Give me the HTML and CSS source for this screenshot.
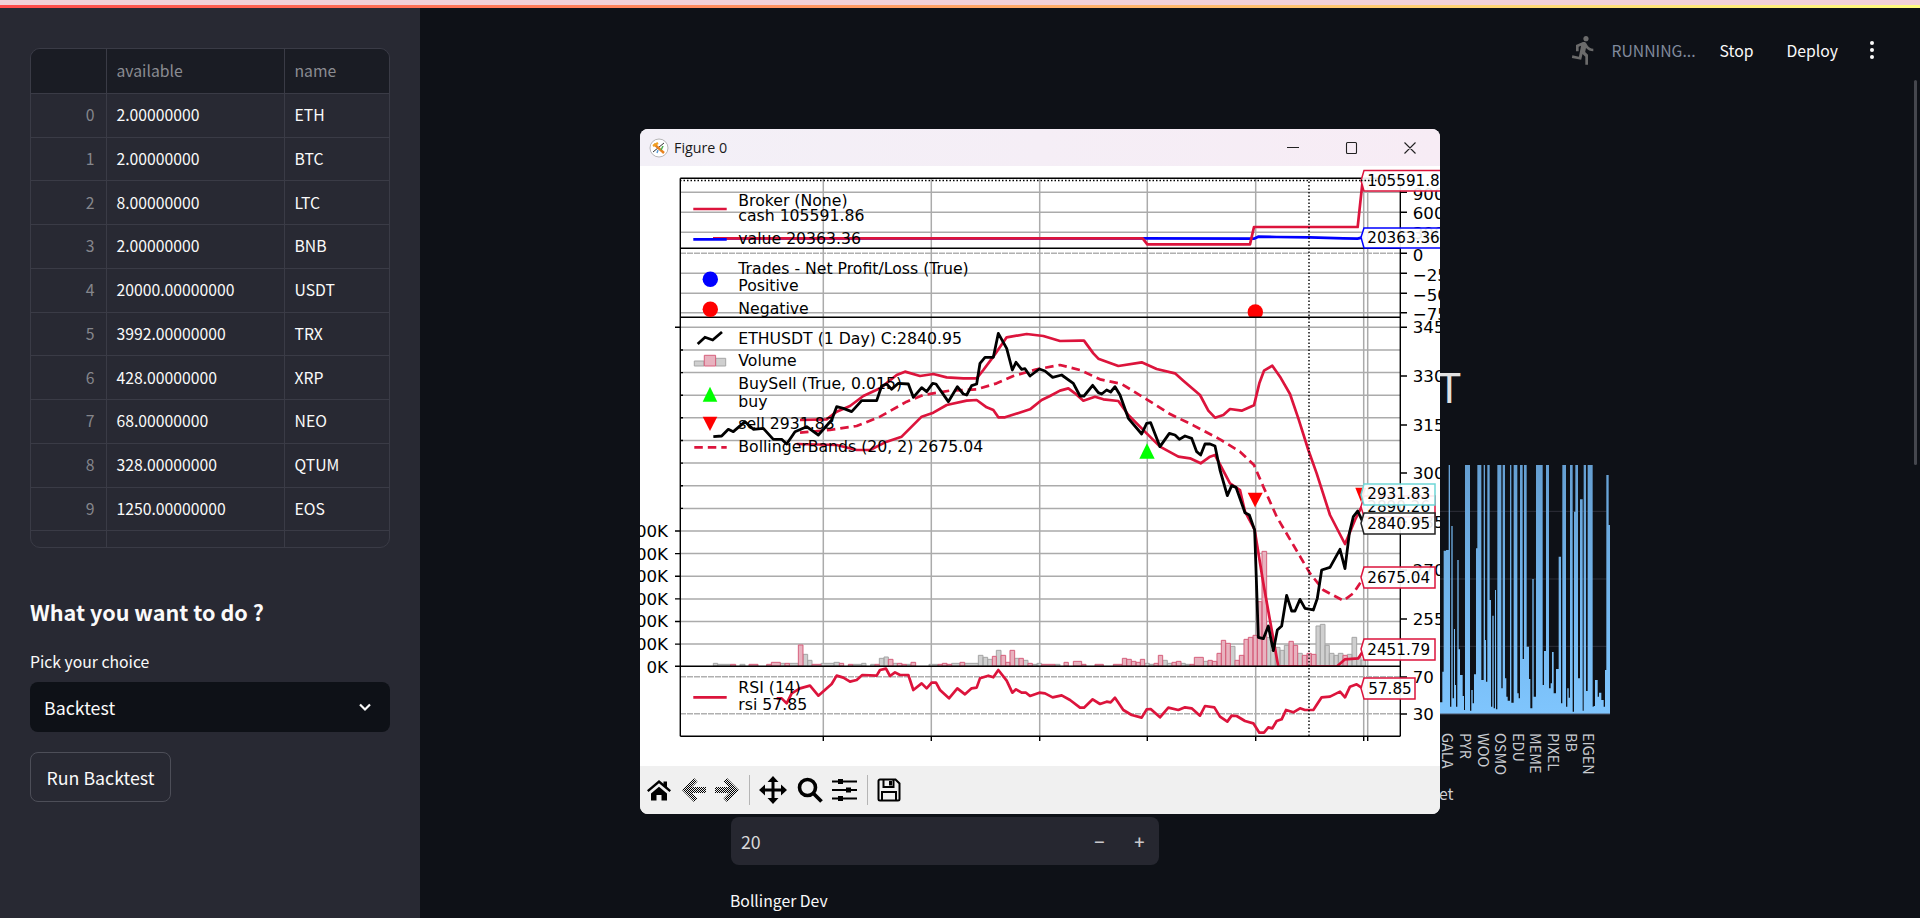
FILE: index.html
```html
<!DOCTYPE html>
<html lang="en">
<head>
<meta charset="utf-8">
<title>Backtest</title>
<link rel="stylesheet" href="styles.css">
</head>
<body>
<div class="loadbar"></div>
<div class="app">
  <aside class="sidebar">
    <div class="df">
      <div class="row head"><div class="c idx"></div><div class="c val">available</div><div class="c nm">name</div></div>
      <div class="row"><div class="c idx">0</div><div class="c val">2.00000000</div><div class="c nm">ETH</div></div>
      <div class="row"><div class="c idx">1</div><div class="c val">2.00000000</div><div class="c nm">BTC</div></div>
      <div class="row"><div class="c idx">2</div><div class="c val">8.00000000</div><div class="c nm">LTC</div></div>
      <div class="row"><div class="c idx">3</div><div class="c val">2.00000000</div><div class="c nm">BNB</div></div>
      <div class="row"><div class="c idx">4</div><div class="c val">20000.00000000</div><div class="c nm">USDT</div></div>
      <div class="row"><div class="c idx">5</div><div class="c val">3992.00000000</div><div class="c nm">TRX</div></div>
      <div class="row"><div class="c idx">6</div><div class="c val">428.00000000</div><div class="c nm">XRP</div></div>
      <div class="row"><div class="c idx">7</div><div class="c val">68.00000000</div><div class="c nm">NEO</div></div>
      <div class="row"><div class="c idx">8</div><div class="c val">328.00000000</div><div class="c nm">QTUM</div></div>
      <div class="row"><div class="c idx">9</div><div class="c val">1250.00000000</div><div class="c nm">EOS</div></div>
      <div class="row"><div class="c idx">10</div><div class="c val">11100.00000000</div><div class="c nm">ONT</div></div>
    </div>
    <h2 class="side-title">What you want to do ?</h2>
    <div class="field-label">Pick your choice</div>
    <div class="select">
      <span>Backtest</span>
      <svg class="chev" width="16" height="16" viewBox="0 0 16 16"><path d="M3 5.500l5 5 5-5" fill="none" stroke="#fafafa" stroke-width="2.200"/></svg>
    </div>
    <button class="btn">Run Backtest</button>
  </aside>

  <main class="main">
    <header class="top">
      <svg class="runner" width="28" height="32" viewBox="2 0 20 24"><path fill="#6b6b6b" d="M13.49 5.480c1.100 0 2-.9 2-2s-.9-2-2-2-2 .9-2 2 .9 2 2 2zm-3.600 13.900l1-4.400 2.100 2v6h2v-7.500l-2.100-2 .6-3c1.300 1.500 3.300 2.500 5.500 2.500v-2c-1.900 0-3.500-1-4.300-2.400l-1-1.600c-.4-.6-1-1-1.700-1-.3 0-.5.100-.8.100l-5.200 2.200v4.700h2v-3.400l1.800-.7-1.600 8.100-4.900-1-.4 2 7 1.400z"/></svg>
      <span class="running">RUNNING...</span>
      <span class="act stop">Stop</span>
      <span class="act deploy">Deploy</span>
      <svg class="dots" width="6" height="20" viewBox="0 0 6 20"><circle cx="3" cy="3" r="2"/><circle cx="3" cy="10" r="2"/><circle cx="3" cy="17" r="2"/></svg>
    </header>
    <div class="column">
      <h1 class="page-title">T</h1>
      <svg class="spectrum" width="190" height="320" viewBox="1420 460 190 320">
        <defs><linearGradient id="barfill" x1="0" y1="0" x2="0" y2="1"><stop offset="0" stop-color="#659fd2"/><stop offset=".6" stop-color="#74b8f0"/><stop offset="1" stop-color="#7fc5fd"/></linearGradient></defs>
        <g transform="translate(1420 340) scale(.33333)">
          <path class="sp-grid" d="M60 514H560M60 717H560M60 919H560"/>
          <path fill="url(#barfill)" d="M60 1122V1087H67V1122ZM67 1122V995H71V1122ZM71 1122V632H78V1122ZM78 1122V630H86V1122ZM86 1122V375H90V1122ZM90 1122V1100H94V1122ZM94 1122V558H98V1122ZM98 1122V1075H102V1122ZM102 1122V867H105V1122ZM105 1122V1035H108V1122ZM108 1122V1100H112V1122ZM112 1122V660H116V1122ZM116 1122V928H120V1122ZM120 1122V1005H128V1122ZM128 1122V1068H132V1122ZM132 1122V1110H135V1122ZM135 1122V375H150V1122ZM150 1122V1112H154V1122ZM154 1122V1050H158V1122ZM158 1122V1090H162V1122ZM162 1122V1003H168V1122ZM168 1122V625H172V1122ZM172 1122V375H184V1122ZM184 1122V1020H191V1122ZM191 1122V375H195V1122ZM195 1122V900H198V1122ZM198 1122V1025H202V1122ZM202 1122V375H209V1122ZM209 1122V780H213V1122ZM213 1122V1100H217V1122ZM217 1122V827H221V1122ZM221 1122V1105H225V1122ZM225 1122V750H228V1122ZM228 1122V1108H232V1122ZM232 1122V375H244V1122ZM244 1122V1045H248V1122ZM248 1122V375H255V1122ZM255 1122V1015H259V1122ZM259 1122V1070H263V1122ZM263 1122V1082H270V1122ZM270 1122V375H274V1122ZM274 1122V1088H281V1122ZM281 1122V375H292V1122ZM292 1122V1060H296V1122ZM296 1122V1075H300V1122ZM300 1122V375H308V1122ZM308 1122V957H312V1122ZM312 1122V375H320V1122ZM320 1122V920H327V1122ZM327 1122V1017H331V1122ZM331 1122V1105H337V1122ZM337 1122V717H341V1122ZM341 1122V1070H348V1122ZM348 1122V375H368V1122ZM368 1122V1035H372V1122ZM372 1122V933H378V1122ZM378 1122V375H387V1122ZM387 1122V1045H392V1122ZM392 1122V1030H396V1122ZM396 1122V936H401V1122ZM401 1122V1060H408V1122ZM408 1122V987H416V1122ZM416 1122V650H423V1122ZM423 1122V1090H427V1122ZM427 1122V375H438V1122ZM438 1122V1100H442V1122ZM442 1122V1045H446V1122ZM446 1122V1073H450V1122ZM450 1122V375H458V1122ZM458 1122V1115H462V1122ZM462 1122V515H466V1122ZM466 1122V375H474V1122ZM474 1122V1015H480V1122ZM480 1122V478H488V1122ZM488 1122V1112H491V1122ZM491 1122V375H498V1122ZM498 1122V1053H503V1122ZM503 1122V375H518V1122ZM518 1122V1100H521V1122ZM521 1122V1098H525V1122ZM525 1122V1020H533V1122ZM533 1122V1070H537V1122ZM537 1122V1058H544V1122ZM544 1122V1080H551V1122ZM551 1122V1100H555V1122ZM555 1122V990H559V1122ZM559 1122V405H566V1122ZM566 1122V555H570V1122Z"/>
          <path class="sp-base" d="M60 1122H570"/>
        </g>
        <g class="sp-labels">
          <text transform="translate(1442 733) rotate(90)">GALA</text>
          <text transform="translate(1460 733) rotate(90)">PYR</text>
          <text transform="translate(1478.300 733) rotate(90)">WOO</text>
          <text transform="translate(1495 733) rotate(90)">OSMO</text>
          <text transform="translate(1512.700 733) rotate(90)">EDU</text>
          <text transform="translate(1530.300 733) rotate(90)">MEME</text>
          <text transform="translate(1548.300 733) rotate(90)">PIXEL</text>
          <text transform="translate(1566 733) rotate(90)">BB</text>
          <text transform="translate(1583.300 733) rotate(90)">EIGEN</text>
        </g>
      </svg>
      <div class="et">et</div>
      <div class="number"><span class="num-val">20</span><span class="num-op minus">−</span><span class="num-op">+</span></div>
      <div class="boll">Bollinger Dev</div>
    </div>
  </main>
</div>
<div class="scroll-thumb"></div>

<section class="window">
  <div class="titlebar">
    <svg class="fig-icon" width="20" height="20" viewBox="0 0 20 20">
      <circle cx="10" cy="10" r="9" fill="#fff" stroke="#999" stroke-width=".7"/>
      <path d="M4 14L15 5" stroke="#333" stroke-width="1"/>
      <path d="M5 6L15 15" stroke="#e8821e" stroke-width="2.400"/>
      <path d="M4 8L9 5" stroke="#f0a020" stroke-width="2.400"/>
      <path d="M12 12l2-4" stroke="#4caf50" stroke-width="1.500"/>
      <path d="M8 15l1-3" stroke="#5b9bd5" stroke-width="1.500"/>
    </svg>
    <span class="fig-title">Figure 0</span>
    <svg class="winctl" width="130" height="14" viewBox="0 0 130 14">
      <path d="M0 6.500H12M59.500 2.500a1 1 0 0 1 1-1h8a1 1 0 0 1 1 1v9a1 1 0 0 1-1 1h-8a1 1 0 0 1-1-1zM117.500 1.500l11 11M128.500 1.500l-11 11" fill="none" stroke="#222" stroke-width="1.100"/>
    </svg>
  </div>
  <svg class="figure" width="800" height="600" viewBox="640 166 800 600">
    <defs>
      <clipPath id="mainclip"><rect x="680" y="318" width="720" height="348.500"/></clipPath>
      <clipPath id="tradeclip"><rect x="680" y="249" width="720" height="68"/></clipPath>
    </defs>
    <rect x="640" y="166" width="800" height="600" fill="#fff"/>

    <path class="grid" d="M680 192.300H1400M680 212.300H1400M680 232.300H1400M680 273.300H1400M680 293.300H1400M680 312.700H1400M680 327.300H1400M680 350H1400M680 372.600H1400M680 395.200H1400M680 417.800H1400M680 440.500H1400M680 463.100H1400M680 485.700H1400M680 508.400H1400M680 531H1400M680 553.600H1400M680 576.200H1400M680 598.900H1400M680 621.500H1400M680 644.100H1400"/>
    <path class="grid" d="M823.300 178V736M931.300 178V736M1039.700 178V736M1147.300 178V736M1255.700 178V736M1363.700 178V736M1367.700 178V736"/>
    <path class="dash" d="M680 253.300H1400M680 676.700H1400M680 713.700H1400"/>

    <g clip-path="url(#mainclip)">
      <g transform="translate(630 520) scale(.33333)">
        <path class="vol-g" d="M250 438V430H263V438ZM263 438V433H302V438ZM330 438V433H345V438ZM451 438V430H465V438ZM478 438V430H505V438ZM519 438V403H533V438ZM533 438V421H546V438ZM573 438V430H612V438ZM612 438V427H628V438ZM668 438V433H695V438ZM695 438V430H708V438ZM722 438V433H735V438ZM748 438V415H762V438ZM762 438V411H775V438ZM789 438V430H802V438ZM829 438V433H843V438ZM897 438V433H924V438ZM965 438V430H990V438ZM1004 438V430H1045V438ZM1045 438V406H1059V438ZM1059 438V412H1073V438ZM1073 438V418H1087V438ZM1099 438V391H1113V438ZM1154 438V415H1167V438ZM1180 438V421H1194V438ZM1207 438V433H1221V438ZM1221 438V430H1235V438ZM1275 438V433H1290V438ZM1544 438V430H1558V438ZM1558 438V433H1572V438ZM1598 438V421H1612V438ZM1612 438V430H1626V438ZM1653 438V430H1666V438ZM1666 438V433H1680V438ZM1720 438V424H1734V438ZM1801 438V379H1815V438ZM1910 438V352H1922V438ZM1922 438V391H1936V438ZM1936 438V382H1950V438ZM1950 438V391H1963V438ZM1963 438V376H1977V438ZM2003 438V400H2017V438ZM2058 438V318H2071V438ZM2071 438V313H2085V438ZM2085 438V376H2098V438ZM2098 438V400H2112V438ZM2112 438V406H2125V438ZM2125 438V400H2139V438ZM2152 438V403H2166V438ZM2166 438V352H2180V438ZM2180 438V412H2193V438ZM2193 438V420H2207V438Z"/>
        <path class="vol-p" d="M302 438V433H317V438ZM357 438V433H384V438ZM410 438V433H424V438ZM424 438V427H451V438ZM465 438V430H478V438ZM505 438V375H519V438ZM546 438V433H573V438ZM628 438V430H641V438ZM655 438V433H668V438ZM735 438V433H748V438ZM775 438V418H789V438ZM802 438V430H816V438ZM816 438V433H829V438ZM843 438V427H857V438ZM924 438V433H937V438ZM937 438V430H951V438ZM951 438V433H965V438ZM990 438V427H1004V438ZM1087 438V409H1099V438ZM1113 438V406H1127V438ZM1127 438V427H1140V438ZM1140 438V391H1154V438ZM1167 438V415H1180V438ZM1194 438V430H1207V438ZM1235 438V433H1275V438ZM1302 438V427H1315V438ZM1330 438V424H1355V438ZM1355 438V433H1368V438ZM1395 438V433H1420V438ZM1450 438V433H1476V438ZM1477 438V415H1490V438ZM1490 438V418H1504V438ZM1504 438V424H1518V438ZM1518 438V427H1531V438ZM1531 438V418H1544V438ZM1572 438V430H1585V438ZM1585 438V406H1598V438ZM1626 438V427H1639V438ZM1639 438V424H1653V438ZM1680 438V433H1693V438ZM1693 438V412H1720V438ZM1734 438V421H1747V438ZM1747 438V424H1761V438ZM1761 438V400H1774V438ZM1774 438V361H1787V438ZM1787 438V370H1801V438ZM1815 438V421H1828V438ZM1828 438V406H1842V438ZM1842 438V358H1855V438ZM1855 438V352H1869V438ZM1869 438V346H1882V438ZM1882 438V245H1896V438ZM1896 438V94H1910V438ZM1977 438V364H1990V438ZM1990 438V376H2003V438ZM2017 438V406H2031V438ZM2031 438V400H2044V438ZM2044 438V403H2058V438ZM2139 438V406H2152V438Z"/>
      </g>
      <g transform="translate(630 320) scale(.33333)">
        <polyline class="crim" points="510,300 590,298 620,275 660,258 700,228 750,205 800,165 825,155 870,168 910,162 950,172 1000,175 1040,175 1060,150 1090,110 1130,52 1190,42 1240,48 1290,63 1350,62 1362,62 1390,100 1405,116 1465,138 1535,127 1580,147 1635,160 1660,182 1710,225 1735,272 1755,293 1780,285 1800,267 1835,272 1872,256 1888,190 1902,152 1927,137 1950,170 1980,222 2005,295 2035,390 2060,460 2100,585 2145,672 2175,600 2195,560"/>
        <polyline class="crim dashed" points="510,338 600,330 680,318 750,290 830,245 880,225 960,212 1040,208 1100,190 1150,168 1220,148 1290,135 1350,150 1410,178 1475,192 1550,238 1620,282 1690,316 1770,358 1830,395 1872,435 1900,500 1940,590 1990,675 2040,760 2080,810 2140,842 2170,820 2198,778"/>
        <polyline class="crim" points="500,372 620,375 680,390 720,390 770,365 815,350 875,290 910,278 950,255 1010,242 1040,240 1070,262 1090,270 1105,292 1125,292 1200,268 1235,240 1260,228 1290,212 1315,205 1335,220 1360,242 1395,230 1420,238 1465,243 1495,285 1550,340 1590,380 1645,410 1680,415 1712,430 1740,410 1755,405 1800,490 1830,510 1845,575 1872,625 1874,630 1900,790 1945,1040 2120,1040 2145,1018 2185,1015 2198,995"/>
        <polyline class="black" points="250,350 275,348 295,328 310,335 345,305 370,328 400,325 430,358 455,358 470,372 495,335 530,320 565,345 605,300 620,260 640,265 665,275 695,242 740,242 755,198 770,192 785,208 805,190 835,192 850,232 875,203 890,215 908,190 918,192 955,245 982,200 1000,222 1010,225 1025,197 1040,192 1050,130 1065,112 1090,112 1105,40 1130,85 1147,150 1158,127 1175,148 1185,146 1200,168 1228,147 1245,153 1268,172 1295,165 1330,190 1350,228 1362,228 1388,196 1405,218 1415,222 1430,210 1442,216 1455,200 1470,225 1495,295 1535,342 1550,310 1562,308 1590,380 1618,340 1635,345 1648,358 1665,348 1685,355 1700,395 1712,405 1725,372 1740,372 1755,378 1770,450 1792,527 1805,497 1818,502 1845,578 1858,585 1872,625 1874,630 1885,952 1900,956 1915,918 1930,992 1942,930 1955,918 1970,826 1985,873 1995,873 2010,838 2025,865 2050,870 2062,835 2075,750 2100,742 2130,688 2145,746 2158,640 2170,590 2183,573 2198,605"/>
      </g>
      <path fill="#0f0" d="M1147 443.300L1139.300 458.700H1154.700Z"/>
      <path fill="#f00" d="M1247.700 492.700H1262.700L1255 507.300Z"/>
      <path fill="#f00" d="M1355.300 487.700H1366.300L1361 502Z"/>
    </g>

    <g transform="translate(1060 120) scale(.33333)">
      <polyline class="blue" points="-1041,355 248,355 582,356 595,350 650,351 750,352 850,355 893,356 908,352"/>
      <polyline class="crim" points="-1041,355 248,355 262,373 570,373 582,321 893,321 908,182"/>
    </g>
    <g clip-path="url(#tradeclip)"><circle cx="1255.300" cy="312" r="7.700" fill="#f00"/></g>
    <g transform="translate(630 520) scale(.33333)">
      <polyline class="crim" points="440,535 455,535 470,550 485,520 510,505 540,497 565,527 605,492 620,467 640,473 660,485 680,480 697,465 740,467 750,450 768,446 780,468 795,457 810,465 835,465 850,510 875,490 890,505 905,488 918,488 930,510 957,535 982,505 1005,523 1025,505 1040,503 1050,475 1075,467 1090,472 1105,450 1130,482 1147,518 1158,508 1175,518 1188,518 1200,528 1228,518 1245,520 1268,532 1295,526 1320,540 1350,563 1362,563 1388,538 1410,552 1430,545 1442,547 1455,533 1480,570 1505,585 1535,593 1550,568 1562,567 1590,592 1615,563 1645,570 1665,562 1685,565 1710,587 1725,558 1753,562 1770,590 1792,605 1805,587 1820,588 1845,603 1870,610 1888,638 1902,638 1915,622 1927,625 1940,603 1955,598 1968,570 1990,577 2010,565 2025,570 2050,570 2075,532 2100,530 2130,515 2145,532 2160,500 2180,493 2198,505"/>
    </g>

    <path class="dotted" d="M680 180.500H1400M1309 178V736"/>
    <path class="spine" d="M680.300 178.300H1400.300M680.300 248.300H1400.300M680.300 317.300H1400.300M680.300 666.300H1400.300M680.300 736.300H1400.300M680.300 178.300V736.300M1400.300 178.300V736.300"/>
    <path class="spine" d="M675 327.300H680M675 531H680M675 553.600H680M675 576.200H680M675 598.900H680M675 621.500H680M675 644.100H680M675 666.300H680M680 350H683M680 372.600H683M680 395.200H683M680 417.800H683M680 440.500H683M680 463.100H683M680 485.700H683M680 508.400H683"/>
    <path class="spine" d="M823.300 736V741M931.300 736V741M1039.700 736V741M1147.300 736V741M1255.700 736V741M1363.700 736V741M1367.700 736V741"/>
    <path class="spine" d="M1400 192.300H1407M1400 212.300H1407M1400 232.300H1407M1400 253.300H1407M1400 273.300H1407M1400 293.300H1407M1400 312.700H1407M1400 327.300H1407M1400 376H1407M1400 425H1407M1400 473H1407M1400 522H1407M1400 570H1407M1400 619H1407M1400 677H1407M1400 714H1407"/>

    <g class="tick">
      <text x="1412.700" y="200">900</text>
      <text x="1412.700" y="218.500">600</text>
      <text x="1412.700" y="239">300</text>
      <text x="1412.700" y="261">0</text>
      <text x="1412.700" y="281">−25</text>
      <text x="1412.700" y="301">−50</text>
      <text x="1412.700" y="320">−75</text>
      <text x="1412.700" y="333.300">345</text>
      <text x="1412.700" y="382">330</text>
      <text x="1412.700" y="431">315</text>
      <text x="1412.700" y="479">300</text>
      <text x="1412.700" y="528">285</text>
      <text x="1412.700" y="576">270</text>
      <text x="1412.700" y="625">255</text>
      <text x="1412.700" y="683">70</text>
      <text x="1412.700" y="720">30</text>
    </g>
    <g class="tick vol-labels">
      <text x="668" y="537">600K</text>
      <text x="668" y="559.500">500K</text>
      <text x="668" y="582">400K</text>
      <text x="668" y="604.500">300K</text>
      <text x="668" y="627">200K</text>
      <text x="668" y="650">100K</text>
      <text x="668" y="672.500">0K</text>
    </g>

    <g class="legend">
      <text x="738.300" y="205.700">Broker (None)</text>
      <text x="738.300" y="221">cash 105591.86</text>
      <text x="738.300" y="244.300">value 20363.36</text>
      <text x="738.300" y="274">Trades - Net Profit/Loss (True)</text>
      <text x="738.300" y="290.700">Positive</text>
      <text x="738.300" y="314">Negative</text>
      <text x="738.300" y="344">ETHUSDT (1 Day) C:2840.95</text>
      <text x="738.300" y="366">Volume</text>
      <text x="738.300" y="389.300">BuySell (True, 0.015)</text>
      <text x="738.300" y="406.700">buy</text>
      <text x="738.300" y="429">sell 2931.83</text>
      <text x="738.300" y="452.300">BollingerBands (20, 2) 2675.04</text>
      <text x="738.300" y="693.300">RSI (14)</text>
      <text x="738.300" y="710">rsi 57.85</text>
    </g>
    <path class="lg-crim" d="M693.300 209H726.700M693.300 697.300H726.700"/>
    <path class="lg-blue" d="M693.300 239.300H726.700"/>
    <circle cx="710.300" cy="279.300" r="7.700" fill="#00f"/>
    <circle cx="710.300" cy="309.300" r="7.700" fill="#f00"/>
    <path class="lg-black" d="M697.700 344L705 337.300L712.700 340L722 332"/>
    <rect class="vol-g" x="694.300" y="361" width="9.700" height="5"/>
    <rect class="vol-g" x="715.700" y="358.300" width="10" height="7.700"/>
    <rect class="vol-p" x="704.300" y="355.300" width="11.300" height="10.700"/>
    <path fill="#0f0" d="M710 386.700L702.700 401.700H717.300Z"/>
    <path fill="#f00" d="M702.700 416.700H717.300L710 431Z"/>
    <path class="lg-dash" d="M694.300 447.300H726.700"/>

    <g class="tag-text">
      <polygon class="tag t-crim" points="1361,180.700 1364,170.500 1470,170.500 1470,191 1364,191"/>
      <text x="1367.300" y="186">105591.86</text>
      <polygon class="tag t-blue" points="1361,237.300 1364,228 1470,228 1470,248 1364,248"/>
      <text x="1367.300" y="242.800">20363.36</text>
      <polygon class="tag t-crim" points="1361,506.700 1364,496 1435,496 1435,517 1364,517"/>
      <text x="1367.300" y="512.200">2890.26</text>
      <polygon class="tag t-cyan" points="1361,494.700 1364,484 1435,484 1435,505 1364,505"/>
      <text x="1367.300" y="499">2931.83</text>
      <polygon class="tag t-black" points="1361,523.300 1364,513 1435,513 1435,534 1364,534"/>
      <text x="1367.300" y="528.800">2840.95</text>
      <polygon class="tag t-crim" points="1361,577.300 1364,567 1435,567 1435,588 1364,588"/>
      <text x="1367.300" y="582.800">2675.04</text>
      <polygon class="tag t-crim" points="1361,649 1364,639 1435,639 1435,660 1364,660"/>
      <text x="1367.300" y="654.500">2451.79</text>
      <polygon class="tag t-crim" points="1361,688.300 1364,678 1415,678 1415,699 1364,699"/>
      <text x="1368.300" y="693.800">57.85</text>
    </g>
    <path class="dotted" d="M1361 180.500H1378"/>
  </svg>
  <div class="toolbar">
    <svg width="26" height="22" viewBox="0 0 26 22"><path d="M13 1L1 11.200l1.500 1.800L13 4.200 23.500 13 25 11.200l-4-3.400V2.500h-3.500v2.300zM5 14.500L13 7.700l8 6.800V21.500h-5.500v-5.500h-5v5.500H5z"/></svg>
    <svg width="24" height="24" viewBox="0 0 24 24"><defs><pattern id="dither" width="2" height="2" patternUnits="userSpaceOnUse"><rect width="1" height="1"/><rect x="1" y="1" width="1" height="1"/></pattern></defs><path fill="url(#dither)" d="M12 0L0 12l12 12 3.500-3.500L10 15h14V9H10l5.500-5.500z"/></svg>
    <svg width="24" height="24" viewBox="0 0 24 24"><path fill="url(#dither)" d="M12 0l12 12-12 12-3.500-3.500L14 15H0V9h14L8.500 3.500z"/></svg>
    <span class="tb-sep"></span>
    <svg width="28" height="28" viewBox="0 0 28 28"><path d="M14 0l5.500 6h-4v6.500H22v-4l6 5.500-6 5.500v-4h-6.500V22h4L14 28l-5.500-6h4v-6.500H6v4L0 14l6-5.500v4h6.500V6h-4z"/></svg>
    <svg width="26" height="26" viewBox="0 0 26 26"><circle cx="10.500" cy="10.500" r="8" fill="none" stroke="#000" stroke-width="3.600"/><path d="M16.500 16.500L24.500 24.500" stroke="#000" stroke-width="3.800"/></svg>
    <svg width="25" height="22" viewBox="0 0 25 22"><path d="M0 2.500H25M0 11H25M0 19.500H25" stroke="#000" stroke-width="1.800"/><path d="M6 0h5v5H6zM14 8.500h5v5h-5zM6 17h5v5H6z"/></svg>
    <span class="tb-sep"></span>
    <svg width="24" height="24" viewBox="0 0 24 24"><path d="M1.500 3a1.500 1.500 0 0 1 1.500-1.500h15.500L22.500 5.500V21a1.500 1.500 0 0 1-1.500 1.500H3A1.500 1.500 0 0 1 1.500 21zM6.500 1.500V9h10V1.500M5 22.500V14h14v8.500" fill="none" stroke="#000" stroke-width="2"/><path d="M12 3h3v4.500h-3z"/></svg>
  </div>
</section>
</body>
</html>
```

FILE: styles.css
```css
* { box-sizing: border-box; }
html, body { margin: 0; height: 918px; overflow: hidden; background: #0e1117; }
body { font-family: "Noto Sans CJK SC", "Noto Sans", sans-serif; color: #fafafa; position: relative; }

.loadbar { height: 8px; border-top: 5px solid #f2d1d8; background: linear-gradient(90deg, #ff4b4b, #fffd80); }
.app { display: flex; height: 910px; }

/* sidebar */
.sidebar { width: 420px; flex: none; background: #282933; padding: 40px 30px 0; }
.df { height: 500px; width: 360px; overflow: hidden; border: 1px solid #3a3b46; border-radius: 10px; }
.row { display: grid; grid-template-columns: 75.5px 178px 1fr; height: 43.75px; font-size: 15.75px; }
.row.head { height: 44.75px; background: #1a1c24; color: #8b8c92; }
.c { border-right: 1px solid #3a3b46; border-bottom: 1px solid #3a3b46; display: flex; align-items: center; padding: 0 8px 1px; white-space: nowrap; }
.c:last-child { border-right: 0; }
.idx { justify-content: flex-end; color: #85868c; padding-right: 11px; }
.val { padding-left: 10px; }
.nm { padding-left: 10px; }
.side-title { margin: 45px 0 0; font-size: 21.6px; line-height: 38px; font-weight: 700; }
.field-label { margin-top: 21px; font-size: 15.75px; line-height: 20px; }
.select { margin-top: 10px; height: 50px; background: #0e1117; border-radius: 8px; display: flex; align-items: center; justify-content: space-between; padding: 0 17px 0 14px; font-size: 17.8px; }
.btn { display: block; margin-top: 20px; width: 141px; height: 50px; background: transparent; border: 1px solid #4d4e58; border-radius: 8px; color: #fafafa; font: inherit; font-size: 17.8px; padding: 0; }

/* main */
.main { flex: 1; min-width: 0; }
.top { height: 84px; display: flex; align-items: center; justify-content: flex-end; padding-right: 45px; font-size: 15.75px; }
.running { color: #808a9c; margin-left: 13px; }
.act { color: #fafafa; }
.stop { margin-left: 24px; }
.deploy { margin-left: 33px; }
.dots { margin-left: 31px; fill: #fafafa; }
.column { width: 880px; margin-left: 310px; }
.page-title { margin: 268px 0 0 707px; font-size: 41px; line-height: 50px; font-weight: 400; color: #e2e2e2; }
.spectrum { display: block; margin: 50px 0 0 690px; }
.sp-grid { stroke: #2e3039; stroke-width: 3; fill: none; }
.sp-base { stroke: #4a5568; stroke-width: 3; fill: none; }
.sp-labels text { font-size: 14.5px; fill: #c9ccd1; }
.et { margin: 4px 0 0 709px; font-size: 15.75px; line-height: 20px; color: #cfcfd2; }
.number { margin-top: 13px; margin-left: 1px; width: 428px; height: 48px; background: #262730; border-radius: 8px; display: flex; align-items: center; padding: 0 11.500px 0 10px; font-size: 17.8px; color: #d8d8da; }
.num-val { flex: 1; }
.num-op { width: 16px; text-align: center; font-size: 18px; font-weight: 500; color: #c8c8cc; }
.minus { margin-right: 24px; }
.boll { margin-top: 26px; font-size: 15.75px; line-height: 20px; color: #fafafa; }

.scroll-thumb { position: absolute; left: 1914px; top: 80px; width: 3px; height: 385px; background: #45474e; border-radius: 2px; }

/* desktop window */
.window { position: absolute; left: 640px; top: 129px; width: 800px; height: 685px; border-radius: 8px 8px 8px 8px; overflow: hidden; background: #fff; display: flex; flex-direction: column; }
.titlebar { height: 37px; flex: none; display: flex; align-items: center; background: linear-gradient(90deg, #f3f0f7, #f7ecf5); padding-left: 9px; color: #1a1a1a; }
.fig-icon { flex: none; }
.fig-title { margin-left: 5px; font-family: "Open Sans", sans-serif; font-size: 14.3px; }
.winctl { margin-left: auto; margin-right: 23px; }
.figure { display: block; flex: none; }
.toolbar { height: 48px; flex: none; background: #f0f0f0; display: flex; align-items: center; gap: 9.500px; padding-left: 6px; }
.tb-sep { width: 1px; height: 30px; background: #b5b5b5; }

/* matplotlib figure */
.grid { stroke: #ababab; stroke-width: 1.500; fill: none; }
.dash { stroke: #b0b0b0; stroke-width: 1.500; stroke-dasharray: 6 1; fill: none; }
.dotted { stroke: #000; stroke-width: 1.400; stroke-dasharray: 1.500 2; fill: none; }
.spine { stroke: #000; stroke-width: 1.400; fill: none; }
.crim { fill: none; stroke: #dc143c; stroke-width: 2.700; vector-effect: non-scaling-stroke; stroke-linejoin: round; }
.crim.dashed { stroke-dasharray: 8.500 5; }
.black { fill: none; stroke: #000; stroke-width: 2.800; vector-effect: non-scaling-stroke; stroke-linejoin: round; }
.blue { fill: none; stroke: #00f; stroke-width: 2.700; vector-effect: non-scaling-stroke; }
.vol-g { fill: #cfcfcf; stroke: #a5a5a5; stroke-width: 1; vector-effect: non-scaling-stroke; }
.vol-p { fill: #e8b2bf; stroke: #d6607c; stroke-width: 1; vector-effect: non-scaling-stroke; }
.tick text { font-family: "DejaVu Sans", sans-serif; font-size: 16.670px; fill: #000; }
.vol-labels text { text-anchor: end; }
.legend text { font-family: "DejaVu Sans", sans-serif; font-size: 15.700px; fill: #000; }
.lg-crim { stroke: #dc143c; stroke-width: 2.700; fill: none; }
.lg-blue { stroke: #00f; stroke-width: 2.700; fill: none; }
.lg-black { stroke: #000; stroke-width: 2.800; fill: none; }
.lg-dash { stroke: #dc143c; stroke-width: 2.700; stroke-dasharray: 8.500 5; fill: none; }
.tag { fill: #fff; fill-opacity: .9; stroke-width: 1.500; }
.t-crim { stroke: #dc143c; }
.t-blue { stroke: #00f; }
.t-cyan { stroke: #6fd6d6; }
.t-black { stroke: #222; }
.tag-text text { font-family: "DejaVu Sans", sans-serif; font-size: 15.200px; fill: #000; }
```
